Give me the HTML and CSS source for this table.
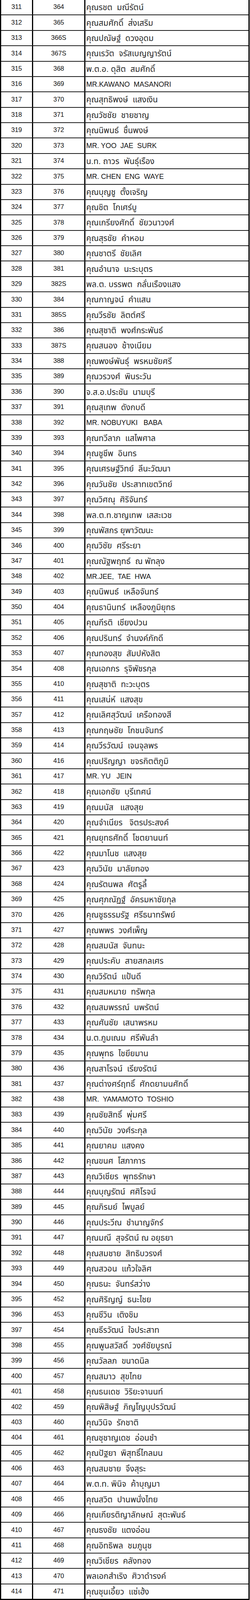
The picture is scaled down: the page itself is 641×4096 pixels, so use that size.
FILE: index.html
```html
<!DOCTYPE html>
<html lang="th">
<head>
<meta charset="utf-8">
<title>รายชื่อ</title>
<link rel="stylesheet" href="styles.css">
</head>
<body>
<div class="list">
<div class="row"><span class="no">311</span><span class="code">364</span><span class="name">คุณรชต  มณีรัตน์</span></div>
<div class="row"><span class="no">312</span><span class="code">365</span><span class="name">คุณสมศักดิ์  ส่งเสริม</span></div>
<div class="row"><span class="no">313</span><span class="code">366S</span><span class="name">คุณปณัษฐ์  ดวงอุดม</span></div>
<div class="row"><span class="no">314</span><span class="code">367S</span><span class="name">คุณเรวัต  จรัสเบญญารัตน์</span></div>
<div class="row"><span class="no">315</span><span class="code">368</span><span class="name">พ.ต.อ. ดุสิต  สมศักดิ์</span></div>
<div class="row"><span class="no">316</span><span class="code">369</span><span class="name en">MR.KAWANO  MASANORI</span></div>
<div class="row"><span class="no">317</span><span class="code">370</span><span class="name">คุณสุทธิพงษ์  แสงเงิน</span></div>
<div class="row"><span class="no">318</span><span class="code">371</span><span class="name">คุณวัชชัย  ชายชาญ</span></div>
<div class="row"><span class="no">319</span><span class="code">372</span><span class="name">คุณนิพนธ์  ชื่นพงษ์</span></div>
<div class="row"><span class="no">320</span><span class="code">373</span><span class="name en">MR. YOO  JAE  SURK</span></div>
<div class="row"><span class="no">321</span><span class="code">374</span><span class="name">น.ท. ถาวร  พันธุ์เรือง</span></div>
<div class="row"><span class="no">322</span><span class="code">375</span><span class="name en">MR. CHEN  ENG  WAYE</span></div>
<div class="row"><span class="no">323</span><span class="code">376</span><span class="name">คุณบุญชู  ตั้งเจริญ</span></div>
<div class="row"><span class="no">324</span><span class="code">377</span><span class="name">คุณชิต  โกเศร์บู</span></div>
<div class="row"><span class="no">325</span><span class="code">378</span><span class="name">คุณเกรียงศักดิ์  ชัยวนาวงศ์</span></div>
<div class="row"><span class="no">326</span><span class="code">379</span><span class="name">คุณสุรชัย  คำหอม</span></div>
<div class="row"><span class="no">327</span><span class="code">380</span><span class="name">คุณชาตรี  ชัยเลิศ</span></div>
<div class="row"><span class="no">328</span><span class="code">381</span><span class="name">คุณอำนาจ  นะระบุตร</span></div>
<div class="row"><span class="no">329</span><span class="code">382S</span><span class="name">พล.ต. บรรพต  กลั่นเรืองแสง</span></div>
<div class="row"><span class="no">330</span><span class="code">384</span><span class="name">คุณกาญจน์  คำแสน</span></div>
<div class="row"><span class="no">331</span><span class="code">385S</span><span class="name">คุณวีรชัย  ลิตต์ศรี</span></div>
<div class="row"><span class="no">332</span><span class="code">386</span><span class="name">คุณสุชาติ  พงศ์กระพันธ์</span></div>
<div class="row"><span class="no">333</span><span class="code">387S</span><span class="name">คุณสนอง  ช้างเนียม</span></div>
<div class="row"><span class="no">334</span><span class="code">388</span><span class="name">คุณพงษ์พันธุ์  พรหมชัยศรี</span></div>
<div class="row"><span class="no">335</span><span class="code">389</span><span class="name">คุณวรวงศ์  พินระวัน</span></div>
<div class="row"><span class="no">336</span><span class="code">390</span><span class="name">จ.ส.อ.ประชัน  นามบุรี</span></div>
<div class="row"><span class="no">337</span><span class="code">391</span><span class="name">คุณสุเทพ  ดังกบดี</span></div>
<div class="row"><span class="no">338</span><span class="code">392</span><span class="name en">MR. NOBUYUKI   BABA</span></div>
<div class="row"><span class="no">339</span><span class="code">393</span><span class="name">คุณทวีลาภ  แสไพศาล</span></div>
<div class="row"><span class="no">340</span><span class="code">394</span><span class="name">คุณชูชีพ  อินทร</span></div>
<div class="row"><span class="no">341</span><span class="code">395</span><span class="name">คุณเศรษฐ์วิทย์  ลีนะวัฒนา</span></div>
<div class="row"><span class="no">342</span><span class="code">396</span><span class="name">คุณวันชัย  ประสาทเขตวิทย์</span></div>
<div class="row"><span class="no">343</span><span class="code">397</span><span class="name">คุณวิศณุ  ศิริจันทร์</span></div>
<div class="row"><span class="no">344</span><span class="code">398</span><span class="name">พล.ต.ท.ชาญเทพ  เสสะเวช</span></div>
<div class="row"><span class="no">345</span><span class="code">399</span><span class="name">คุณพัสกร ยุพาวัฒนะ</span></div>
<div class="row"><span class="no">346</span><span class="code">400</span><span class="name">คุณวิชัย  ศรีระยา</span></div>
<div class="row"><span class="no">347</span><span class="code">401</span><span class="name">คุณณัฐพฤทธ์  ณ พัทลุง</span></div>
<div class="row"><span class="no">348</span><span class="code">402</span><span class="name en">MR.JEE,  TAE  HWA</span></div>
<div class="row"><span class="no">349</span><span class="code">403</span><span class="name">คุณนิพนธ์  เหลือจันทร์</span></div>
<div class="row"><span class="no">350</span><span class="code">404</span><span class="name">คุณธานินทร์  เหลืองภูมิยุทธ</span></div>
<div class="row"><span class="no">351</span><span class="code">405</span><span class="name">คุณกีรติ  เชียงปวน</span></div>
<div class="row"><span class="no">352</span><span class="code">406</span><span class="name">คุณปรินทร์  จำนงค์ภักดี</span></div>
<div class="row"><span class="no">353</span><span class="code">407</span><span class="name">คุณทองสุข  สัมปหังสิต</span></div>
<div class="row"><span class="no">354</span><span class="code">408</span><span class="name">คุณเอกกร  รุจิพัชรกุล</span></div>
<div class="row"><span class="no">355</span><span class="code">410</span><span class="name">คุณสุชาติ  ทะวะบุตร</span></div>
<div class="row"><span class="no">356</span><span class="code">411</span><span class="name">คุณเสน่ห์  แสงสุข</span></div>
<div class="row"><span class="no">357</span><span class="code">412</span><span class="name">คุณเลิศสุวัฒน์  เครือทองสี</span></div>
<div class="row"><span class="no">358</span><span class="code">413</span><span class="name">คุณกฤษชัย  โกชนจันทร์</span></div>
<div class="row"><span class="no">359</span><span class="code">414</span><span class="name">คุณวีรวัฒน์  เจนจุลพร</span></div>
<div class="row"><span class="no">360</span><span class="code">416</span><span class="name">คุณปริญญา  ขจรกิตติภูมิ</span></div>
<div class="row"><span class="no">361</span><span class="code">417</span><span class="name en">MR. YU   JEIN</span></div>
<div class="row"><span class="no">362</span><span class="code">418</span><span class="name">คุณเอกชัย  บุรีเทศน์</span></div>
<div class="row"><span class="no">363</span><span class="code">419</span><span class="name">คุณมนัส   แสงสุย</span></div>
<div class="row"><span class="no">364</span><span class="code">420</span><span class="name">คุณจำเนียร   จิตรประสงค์</span></div>
<div class="row"><span class="no">365</span><span class="code">421</span><span class="name">คุณยุทธศักดิ์  โชตยานนท์</span></div>
<div class="row"><span class="no">366</span><span class="code">422</span><span class="name">คุณมาโนช  แสงสุย</span></div>
<div class="row"><span class="no">367</span><span class="code">423</span><span class="name">คุณวินัย  มาลัยทอง</span></div>
<div class="row"><span class="no">368</span><span class="code">424</span><span class="name">คุณรัตนพล  ศัตรูลี้</span></div>
<div class="row"><span class="no">369</span><span class="code">425</span><span class="name">คุณศุภณัฏฐ์  อัครมหาชัยกุล</span></div>
<div class="row"><span class="no">370</span><span class="code">426</span><span class="name">คุณชูธรรมรัฐ  ศรีธนาทรัพย์</span></div>
<div class="row"><span class="no">371</span><span class="code">427</span><span class="name">คุณพพร  วงศ์เพ็ญ</span></div>
<div class="row"><span class="no">372</span><span class="code">428</span><span class="name">คุณสมนัส  จันทนะ</span></div>
<div class="row"><span class="no">373</span><span class="code">429</span><span class="name">คุณประคับ  สายสกลเศร</span></div>
<div class="row"><span class="no">374</span><span class="code">430</span><span class="name">คุณวิรัตน์  แป้นดี</span></div>
<div class="row"><span class="no">375</span><span class="code">431</span><span class="name">คุณสมหมาย  ทรัพกุล</span></div>
<div class="row"><span class="no">376</span><span class="code">432</span><span class="name">คุณสมพรรณ์  นพรัตน์</span></div>
<div class="row"><span class="no">377</span><span class="code">433</span><span class="name">คุณศันชัย  เสนาพรหม</span></div>
<div class="row"><span class="no">378</span><span class="code">434</span><span class="name">น.ต.ภูมเณม  ศรีพันลำ</span></div>
<div class="row"><span class="no">379</span><span class="code">435</span><span class="name">คุณพุทธ  ไชยียมาน</span></div>
<div class="row"><span class="no">380</span><span class="code">436</span><span class="name">คุณสาโรจน์  เรียงรัตน์</span></div>
<div class="row"><span class="no">381</span><span class="code">437</span><span class="name">คุณต่างศร์ฤทธิ์  ศักดยามนศักดิ์</span></div>
<div class="row"><span class="no">382</span><span class="code">438</span><span class="name en">MR.  YAMAMOTO  TOSHIO</span></div>
<div class="row"><span class="no">383</span><span class="code">439</span><span class="name">คุณชัยสิทธิ์  พุ่มศรี</span></div>
<div class="row"><span class="no">384</span><span class="code">440</span><span class="name">คุณวินัย  วงศ์ระกุล</span></div>
<div class="row"><span class="no">385</span><span class="code">441</span><span class="name">คุณยาคม  แสงคง</span></div>
<div class="row"><span class="no">386</span><span class="code">442</span><span class="name">คุณขนศ  โสภาการ</span></div>
<div class="row"><span class="no">387</span><span class="code">443</span><span class="name">คุณวิเชียร  พุทธรักษา</span></div>
<div class="row"><span class="no">388</span><span class="code">444</span><span class="name">คุณบุญรัตน์  ศศิโรจน์</span></div>
<div class="row"><span class="no">389</span><span class="code">445</span><span class="name">คุณภิรมย์  ไพบูลย์</span></div>
<div class="row"><span class="no">390</span><span class="code">446</span><span class="name">คุณประวีณ  ชำนาญจักร์</span></div>
<div class="row"><span class="no">391</span><span class="code">447</span><span class="name">คุณมณี  สุจรัตน์ ณ อยุธยา</span></div>
<div class="row"><span class="no">392</span><span class="code">448</span><span class="name">คุณสมชาย  สิทธิบวรงศ์</span></div>
<div class="row"><span class="no">393</span><span class="code">449</span><span class="name">คุณสวอน  แก้วใจลิศ</span></div>
<div class="row"><span class="no">394</span><span class="code">450</span><span class="name">คุณธนะ  จันทร์สว่าง</span></div>
<div class="row"><span class="no">395</span><span class="code">452</span><span class="name">คุณศิริญญ์  ธนะไชย</span></div>
<div class="row"><span class="no">396</span><span class="code">453</span><span class="name">คุณชีวิน  เติงชิม</span></div>
<div class="row"><span class="no">397</span><span class="code">454</span><span class="name">คุณธีรวัฒน์  ใจประสาท</span></div>
<div class="row"><span class="no">398</span><span class="code">455</span><span class="name">คุณพูนสวัสดิ์  วงศ์ชัยบูรณ์</span></div>
<div class="row"><span class="no">399</span><span class="code">456</span><span class="name">คุณวัลลภ  ขนาดนิล</span></div>
<div class="row"><span class="no">400</span><span class="code">457</span><span class="name">คุณสมาว  สุขไทย</span></div>
<div class="row"><span class="no">401</span><span class="code">458</span><span class="name">คุณธนเดช  วิริยะจานนท์</span></div>
<div class="row"><span class="no">402</span><span class="code">459</span><span class="name">คุณพิสิษฐ์  ภิญโญบุปรวัฒน์</span></div>
<div class="row"><span class="no">403</span><span class="code">460</span><span class="name">คุณวินิจ  รักชาติ</span></div>
<div class="row"><span class="no">404</span><span class="code">461</span><span class="name">คุณชุชาญเดช  อ่อนชำ</span></div>
<div class="row"><span class="no">405</span><span class="code">462</span><span class="name">คุณปัฐยา  พิสุทธิ์ไกลมน</span></div>
<div class="row"><span class="no">406</span><span class="code">463</span><span class="name">คุณสมชาย  จึงสุระ</span></div>
<div class="row"><span class="no">407</span><span class="code">464</span><span class="name">พ.ต.ท. พินิจ  ค้าบุญมา</span></div>
<div class="row"><span class="no">408</span><span class="code">465</span><span class="name">คุณสวิต  ปานพนั่งไทย</span></div>
<div class="row"><span class="no">409</span><span class="code">466</span><span class="name">คุณเกียรติญาลักษณ์  สุตะพันธ์</span></div>
<div class="row"><span class="no">410</span><span class="code">467</span><span class="name">คุณธงชัย  แตงอ่อน</span></div>
<div class="row"><span class="no">411</span><span class="code">468</span><span class="name">คุณอิทธิพล  ชมภูนุช</span></div>
<div class="row"><span class="no">412</span><span class="code">469</span><span class="name">คุณวิเชียร  คลังทอง</span></div>
<div class="row"><span class="no">413</span><span class="code">470</span><span class="name">พลเอกสำเริง  ศิวาดำรงค์</span></div>
<div class="row"><span class="no">414</span><span class="code">471</span><span class="name">คุณชุนเอี้ยว  แซ่เฮ้ง</span></div>
</div>
</body>
</html>
```
FILE: styles.css
```css
html, body {
  margin: 0;
  padding: 0;
  background: #ffffff;
}

.list {
  width: 640px;
  box-sizing: border-box;
  border-left: 3px solid #000;
  border-right: 3px solid #000;
  border-bottom: 3px solid #000;
  font-family: "Liberation Sans", "Noto Sans Thai", "Loma", "Garuda", "DejaVu Sans", sans-serif;
  font-size: 16.6px;
  color: #111;
}

.row {
  display: grid;
  grid-template-columns: 82px 134px 1fr;
  height: 39.38px;
  box-sizing: border-box;
  border-bottom: 2px solid #1c1c1c;
}

.row:last-child {
  height: 37.38px;
  border-bottom: none;
}

.no,
.code,
.name {
  display: flex;
  align-items: center;
  white-space: pre;
  line-height: 1;
}

.no,
.code {
  justify-content: center;
  border-right: 3px solid #000;
  box-sizing: border-box;
}

.name {
  padding-left: 2px;
  font-size: 21px;
  color: #2a2a2a;
}

.name.en {
  font-size: 18px;
  color: #111;
}
```
